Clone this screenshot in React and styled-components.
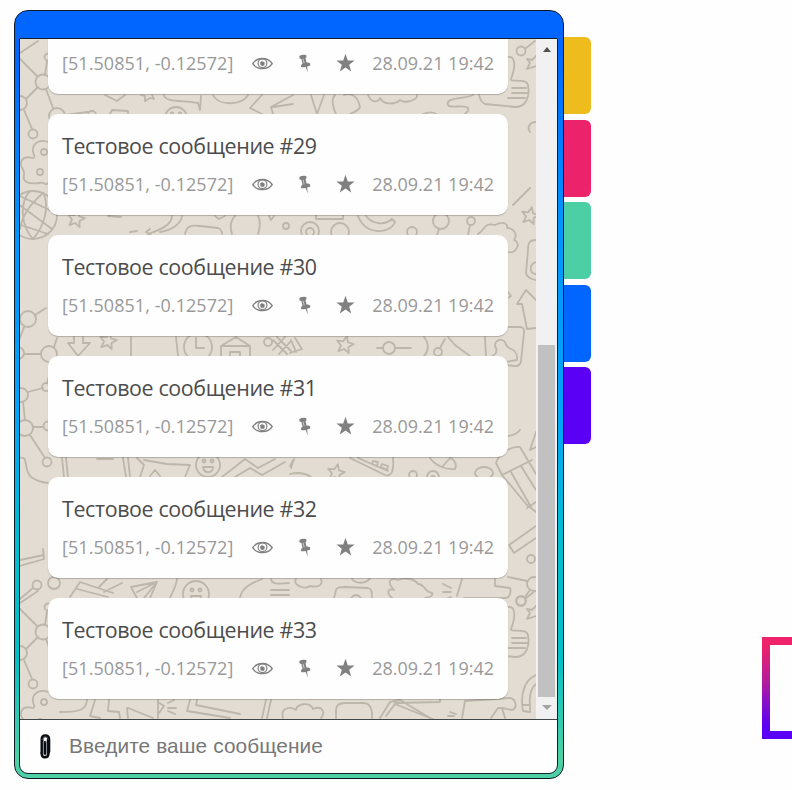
import React from "react";
import styled, { createGlobalStyle } from "styled-components";

const GlobalStyle = createGlobalStyle`
  * { box-sizing: border-box; }
  body { margin: 0; background: #fefefe; overflow: hidden; }
`;

const Page = styled.main`
  display: flex;
  align-items: flex-start;
  width: 792px;
  height: 790px;
  padding: 10px 0 0 14px;
  overflow: hidden;
  font-family: "Open Sans", "Noto Sans", sans-serif;
`;

const Panel = styled.section`
  flex: none;
  display: flex;
  flex-direction: column;
  width: 550px;
  height: 769px;
  padding: 27px 5px 4px 4px;
  border: 1px solid #0c1a26;
  border-radius: 14px;
  background: linear-gradient(180deg, #06f 0%, #06f 5%, #0094ff 28%, #00a4fa 52%, #00bfcf 70%, #00c0c8 84%, #4dd0a5 97%);
`;

const Inner = styled.div`
  flex: 1;
  display: flex;
  flex-direction: column;
  border: 1px solid #10202a;
  border-radius: 1px 1px 9px 9px;
  background: #fefefe;
  overflow: hidden;
`;

const ChatArea = styled.div`
  display: flex;
  height: 680px;
`;

const Feed = styled.div`
  position: relative;
  display: flex;
  flex-direction: column;
  justify-content: flex-end;
  gap: 20px;
  width: 516px;
  height: 680px;
  padding: 0 28px 20px;
  overflow: hidden;
  background: #e2dcd3;
`;

const Wallpaper = styled.svg`
  position: absolute;
  inset: 0;
  fill: none;
  stroke: #bcb6ab;
  stroke-width: 1.8;
  stroke-linecap: round;
  stroke-linejoin: round;
`;

const Card = styled.article`
  position: relative;
  flex: none;
  display: flex;
  flex-direction: column;
  justify-content: flex-end;
  height: 101px;
  padding: 0 14px 17px;
  border-radius: 10px;
  background: #fefefe;
  box-shadow: 0 1px 1px rgba(0, 0, 0, 0.22);
`;

const Title = styled.p`
  margin: 0;
  height: 33px;
  font-size: 21.4px;
  line-height: 33px;
  letter-spacing: -0.36px;
  white-space: nowrap;
  color: #4c4c4c;
`;

const Meta = styled.div`
  display: flex;
  align-items: center;
  height: 28px;
  margin-top: 8px;
  color: #999;
  font-size: 18px;
  line-height: 28px;
  white-space: nowrap;
`;

const Coords = styled.span`
  width: 191px;
  letter-spacing: 0.06px;
`;

const IconSlot = styled.span`
  display: flex;
  width: ${(p) => p.$width}px;
  height: 20px;
  color: #808080;
`;

const Scrollbar = styled.div`
  display: flex;
  flex-direction: column;
  align-items: center;
  justify-content: space-between;
  width: 21px;
  padding: 8px 0 9px;
  background: #f1f1f1;
`;

const Thumb = styled.div`
  width: 17px;
  height: 352px;
  margin: auto 0 8px;
  background: #c1c1c1;
`;

const Arrow = styled.svg`
  flex: none;
  display: block;
  width: 10px;
  height: 5px;
  fill: ${(p) => p.$color};
`;

const Composer = styled.form`
  display: flex;
  align-items: center;
  height: 54px;
  padding-left: 20px;
  border-top: 1px solid #414748;
`;

const Field = styled.input`
  flex: 1;
  margin-left: 18px;
  padding: 0 0 2px;
  border: 0;
  outline: 0;
  background: transparent;
  font: 20.8px "Liberation Sans", Arial, sans-serif;
  letter-spacing: 0.12px;
  &::placeholder { color: #777; opacity: 1; }
`;

const Tabs = styled.nav`
  flex: none;
  display: flex;
  flex-direction: column;
  gap: 5.5px;
  width: 27px;
  margin-top: 27px;
`;

const Tab = styled.div`
  height: 77px;
  border-radius: 0 6px 6px 0;
  background: ${(p) => p.$color};
`;

const Frame = styled.div`
  flex: none;
  width: 102px;
  height: 102px;
  margin: 627px 0 0 171px;
  border: 8px solid;
  border-image: linear-gradient(180deg, #ee2369 8%, #b51c9b 43%, #8510c8 65%, #5a00f5 88%) 8;
`;

const Star = ({ x, y, r = 7 }) => {
  const pts = Array.from({ length: 10 }, (_, i) => {
    const a = -Math.PI / 2 + 0.2 + (i * Math.PI) / 5;
    const d = i % 2 ? r * 0.45 : r;
    return `${(x + d * Math.cos(a)).toFixed(1)},${(y + d * Math.sin(a)).toFixed(1)}`;
  });
  return <polygon points={pts.join(" ")} />;
};

const Face = ({ x, y, r }) => (
  <g>
    <circle cx={x} cy={y} r={r} />
    <circle cx={x - 4} cy={y - 4} r="1.5" />
    <circle cx={x + 4} cy={y - 4} r="1.5" />
    <path d={`M${x - 5} ${y + 2}h10c0 7-9 7-10 0`} />
  </g>
);

const nodes = [
  [28, 319, 8], [18, 353, 6], [49, 354, 8], [46, 387, 4], [21, 395, 7], [25, 428, 8],
  [48, 426, 4.5], [47, 462, 4.5], [37, 585, 4.5], [54, 583, 6], [286, 226, 3], [441, 221, 8],
  [471, 221, 4], [412, 232, 5], [310, 231, 9], [310, 232, 4], [340, 232, 9], [268, 342, 4],
  [389, 348, 6], [438, 352, 4], [413, 475, 4], [433, 477, 6], [433, 478, 2], [531, 559, 4],
  [534, 584, 7], [521, 601, 5],
];

const strokes = [
  // upper strip
  "M105 95L117 101 125 95M141 95l4 1 0 5 5-3 4 1-2-4M164 95C165 103 185 100 198 103L200 110 201 96M213 95C218 106 242 106 248 95",
  "M110 114L112 110 128 111 128 114M262 95L250 108 262 114M273 114L271 107 293 95M273 107L293 104",
  "M311 95L317 114 324 95M336 114C332 105 332 98 335 95M344 95C352 92 358 97 360 107 358 111 355 112 350 114M368 95C371 103 378 103 380 98 384 106 396 104 400 100 405 104 418 100 417 95M423 114C428 112 433 112 436 114",
  "M473 95C465 99 445 97 448 105 450 109 465 104 468 108 470 111 466 112 465 114M536 122c-7 0-9 6-6 10",
  // globe and its neighbours
  "M14 201l38 28M20 229C23 212 33 202 43 193M33 239C45 225 49 207 44 194M20 196l36 17M18 224l30 10M30 191C20 201 20 225 33 239",
  "M148 234C160 230 172 225 172 216M160 232C172 230 181 224 182 216M150 229l-4 3 5 3M130 232l7-1M185 234C187 226 190 225 200 226L218 228C222 229 222 234 222 234M232 234C228 222 235 216 235 216M258 216C262 222 258 234 258 234M269 216l2 4 3-4M215 216l4 3 6-3M108 216l13 1",
  "M316 215v4h27v-4M358 216C366 236 390 234 395 222L392 219C384 226 372 224 366 216M439 229l-2 6M470 225l-2 10M478 234C485 230 484 222 495 225 505 220 508 225 507 228 514 228 518 235 514 240 522 243 516 254 508 252",
  "M513 205l17-17M536 240C530 240 528 242 528 250L526 273C527 279 536 280 536 280M536 262c-7 2-7 12 0 12M517 304L526 290 536 300M517 304h5l5 25 9-1M508 292l3 4-3 2",
  "M485 337L486 356M508 327h12q5 0 4 6l-3 28q-1 6-7 5l-8-1M492 356c4-1 6-5 3-10 0-8 10-8 11-1l3 3c6 2 9 5 8 12l-11 2",
  // middle-left network
  "M24 327L20 338M35 315L46 308M24 354H41M54 347l3-9M53 362l-6 21M28 392l15-4M23 402l2 18M33 427h10M30 435l15 23M20 458C29 455 23 470 31 477Q38 482 48 483",
  "M74 337V343H68L78 356 90 343H83V337M131 337V356M176 337l2 19M196 338v10h8M221 356V346L236 337 250 346V356M221 346H250M230 356v-4h10v4M273 340l14 14M277 337l14 14M273 350l12-13M279 354l12-13",
  "M290 353L302 349 295 338M291 340l5 12M377 348h6M395 348h16M424 337C430 344 428 352 424 356M440 348l5-9M448 337l7 8 15 11",
  // fourth strip
  "M62 458L64 477M66 458l2 19M123 458l3 19M128 458l2 19M137 458L144 465 140 477M150 476L155 470 160 476M144 460L167 464 190 465 185 477M97 459h16M222 477L245 459 258 468 275 459M235 477L250 468 262 475 285 462",
  "M290 466l4-7-3 9M350 458L385 475C392 477 394 470 393 458M358 458L388 471M373 461l5 1-1 4-5-2zM382 464l6 2-1 4-6-3zM430 458C435 465 445 470 455 469 458 463 452 458 450 458M443 466l7-8M290 474q12-3 21 3",
  "M496 463C500 452 512 446 520 447L536 474M496 463l6 12 25 30 9 7M502 475L532 460M511 472l20 35M521 466l15 24M527 508l9-6M509 545L536 526M509 545L514 553 536 538M530 450l6-18M530 450l6-3M508 436q8-1 12-6",
  // fifth strip
  "M20 566L44 559 43 549M20 560l24-5M33 588L20 599M70 597L80 582 113 593M77 589l31 8M99 587l8-8M104 592L122 583M131 587L157 582 150 598M131 587L137 598M157 582L137 592M157 582l-13 16M177 579C176 588 172 592 170 598M240 598C242 586 255 582 262 579M271 579C272 586 283 583 289 583M271 590H289M271 595H289",
  "M296 579C292 585 305 590 310 586 320 588 323 584 321 579M352 579C356 584 364 584 370 579M334 598L336 590C337 587 340 587 345 587L368 588C372 589 372 592 372 598M351 598q5-6 10 0M392 598C386 592 388 588 394 590 385 580 392 578 398 580 405 577 415 579 418 584 425 584 424 592 432 593 434 597 425 598 425 598M443 584l8 4M443 592h8M443 600l8-3M462 579L457 596M464 598H505C511 598 511 590 510 588L495 586V579M508 577l19 4M525 597l5-7",
  "M536 675C524 680 520 695 523 711L530 712V705C529 695 531 688 536 684M523 705h7",
  // bottom strip
  "M60 712C80 712 86 710 87 700M95 700L90 716 100 718M109 700L108 711 119 712 120 718M158 700V718M158 702l6 4-5 7M127 708L128 718M128 708L153 718M168 703l6-3M168 708h8M168 711l7 3M190 700L187 711 230 718M197 700L196 705 240 714M266 700L262 718M271 700L267 718M283 718C280 708 290 706 296 710 297 703 310 702 313 709 322 705 326 712 321 718",
  "M336 718V710Q336 703 345 703H363Q373 703 372 718M380 718L390 702 400 700 430 718M386 716l9-12 40 16M395 703L440 702V699M448 716h6M450 712l6 2M462 718L465 701 510 698C516 699 518 708 512 710L502 708 505 718M491 718l7-10 4 0",
];

const repeated = [
  "M20 59L37 76M20 53L38 41M45 75L47 61M38 87L26 99M46 89L53 108M24 110L32 129M65 115L88 112",
  "M48 142C37 138 30 146 34 155 36 162 27 153 22 160 18 168 25 167 24 175 22 183 30 184 40 183 44 181 45 187 48 183",
  "M508 57C514 56 517 63 511 79 510 83 528 77 528 86 530 96 526 107 516 107L485 104C480 102 480 97 479 95M512 88H526M512 93H527M508 98H525",
  "M526 48L535 41M527 59l5 1 4-4M527 59l3 4-3 6 9-3",
];

const TilePart = ({ dy = 0 }) => (
  <g transform={`translate(0 ${dy})`}>
    {repeated.map((d) => <path key={d} d={d} />)}
    <circle cx="43" cy="82" r="7.5" />
    <circle cx="48" cy="57" r="3.5" />
    <circle cx="20" cy="103" r="7" />
    <circle cx="33" cy="134" r="4.5" />
    <circle cx="57" cy="116" r="8" />
    <circle cx="44" cy="152" r="3" />
    <circle cx="40" cy="172" r="3" />
    <circle cx="521" cy="51" r="4.5" />
  </g>
);

const Doodles = () => (
  <Wallpaper width="516" height="680" viewBox="20 39 516 680" aria-hidden="true">
    <TilePart />
    <TilePart dy={550} />
    <circle cx="92" cy="115" r="4" />
    <circle cx="33" cy="215" r="24" />
    <circle cx="198" cy="347" r="14" />
    <ellipse cx="484" cy="473" rx="9" ry="6" />
    {nodes.map(([x, y, r]) => <circle key={`${x}-${y}-${r}`} cx={x} cy={y} r={r} />)}
    {strokes.map((d) => <path key={d} d={d} />)}
    <Star x={76} y={219} r={9} />
    <Star x={530} y={216} r={9} />
    <Star x={108} y={341} r={9} />
    <Star x={345} y={345} r={9} />
    <Star x={336} y={473} r={9} />
    <Face x={176} y={118} r={11} />
    <Face x={208} y={465} r={12} />
    <Face x={196} y={594} r={13} />
  </Wallpaper>
);

const EyeIcon = () => (
  <svg width="21" height="20" viewBox="0 0 21 20" fill="none" stroke="currentColor">
    <path d="M.8 10.7C5 3.7 16 3.7 20.2 10.7 16 17.3 5 17.3.8 10.7Z" strokeWidth="1.4" />
    <circle cx="10.5" cy="10.3" r="4.4" strokeWidth="1.2" />
    <circle cx="10.5" cy="10.8" r="2.3" fill="currentColor" stroke="none" />
    <path d="M8.3 10.5q.2-2 2.2-2.3" strokeWidth=".8" />
  </svg>
);

const PinIcon = () => (
  <svg width="12" height="20" viewBox="0 0 12 20" fill="currentColor">
    <path d="M.3 3.1Q3 1.3 7.2 2L7.5 4.1 6.5 5.2 7.5 9.6Q10.8 8.9 11.3 11L10.9 12.7 8.1 13.5 8.8 19.8 6.7 13.9Q3 14.9 2 13.7 1.5 11.7 3.5 10.7L2.4 6.1.6 5.5Z" />
    <path d="M4.1 5.8 5.2 10.3" stroke="#ddd" strokeWidth=".8" />
  </svg>
);

const StarIcon = () => (
  <svg width="19" height="20" viewBox="0 0 19 20" fill="currentColor">
    <path d="M9.5.8 11.8 7.5 18.6 7.6 13.2 11.7 15.2 18.4 9.5 14.4 3.8 18.4 5.8 11.7.4 7.6 7.2 7.5Z" />
  </svg>
);

const ClipIcon = () => (
  <svg width="11" height="25" viewBox="0 0 11 25" fill="none" strokeLinecap="round">
    <path d="M2 19V5Q2 1.8 5.4 1.8T8.8 5V17.5" stroke="#080b10" strokeWidth="3" />
    <path d="M8.5 17.5V19Q8.5 23.3 5 23.3T1.8 19" stroke="#080b10" strokeWidth="2.6" />
    <path d="M5.1 8V20M8 6V19" stroke="#080b10" strokeWidth="2.4" />
    <path d="M3.3 8V19.5Q3.5 21.3 5 21.3T6.6 19.5V9Q6.5 7.5 5.2 7.5" stroke="#8b929a" strokeWidth=".65" />
    <path d="M2.2 5.5Q3 2.5 5.4 2.5T8.4 5.5" stroke="#7f858c" strokeWidth=".5" />
  </svg>
);

const Message = ({ title }) => (
  <Card>
    {title && <Title>{title}</Title>}
    <Meta>
      <Coords>[51.50851, -0.12572]</Coords>
      <IconSlot $width={47}><EyeIcon /></IconSlot>
      <IconSlot $width={37}><PinIcon /></IconSlot>
      <IconSlot $width={36.4}><StarIcon /></IconSlot>
      <time>28.09.21 19:42</time>
    </Meta>
  </Card>
);

export default function App() {
  return (
    <Page>
      <GlobalStyle />
      <Panel>
        <Inner>
          <ChatArea>
            <Feed>
              <Doodles />
              <Message />
              {[29, 30, 31, 32, 33].map((n) => <Message key={n} title={`Тестовое сообщение #${n}`} />)}
            </Feed>
            <Scrollbar>
              <Arrow $color="#505050" viewBox="0 0 10 5"><path d="M1 5 5 0 9 5Z" /></Arrow>
              <Thumb />
              <Arrow $color="#a3a3a3" viewBox="0 0 10 5"><path d="M0 0H10L5 5Z" /></Arrow>
            </Scrollbar>
          </ChatArea>
          <Composer>
            <ClipIcon />
            <Field placeholder="Введите ваше сообщение" />
          </Composer>
        </Inner>
      </Panel>
      <Tabs>
        {["#eebc1d", "#ec226b", "#4dcfa5", "#0066ff", "#5a00f5"].map((c) => <Tab key={c} $color={c} />)}
      </Tabs>
      <Frame />
    </Page>
  );
}
